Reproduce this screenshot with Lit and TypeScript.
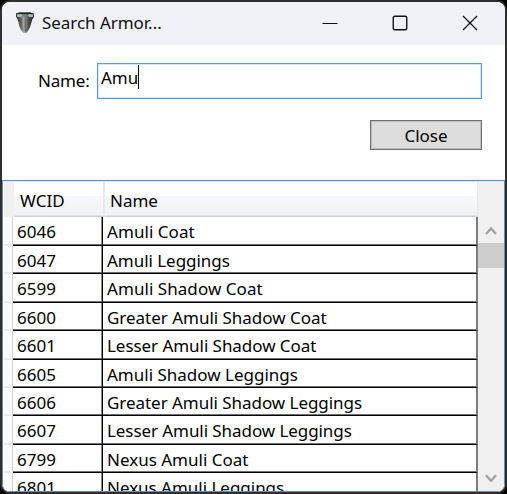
import { LitElement, html, css } from "lit";
import { customElement, property } from "lit/decorators.js";
import { styleMap } from "lit/directives/style-map.js";

interface Armor {
  wcid: string;
  name: string;
  height: number;
  tracking: number;
}

const ARMOR: Armor[] = [
  { wcid: "6046", name: "Amuli Coat", height: 29, tracking: 0.06 },
  { wcid: "6047", name: "Amuli Leggings", height: 28, tracking: -0.04 },
  { wcid: "6599", name: "Amuli Shadow Coat", height: 29, tracking: 0.06 },
  { wcid: "6600", name: "Greater Amuli Shadow Coat", height: 28, tracking: -0.02 },
  { wcid: "6601", name: "Lesser Amuli Shadow Coat", height: 29, tracking: -0.05 },
  { wcid: "6605", name: "Amuli Shadow Leggings", height: 28, tracking: 0 },
  { wcid: "6606", name: "Greater Amuli Shadow Leggings", height: 28, tracking: -0.04 },
  { wcid: "6607", name: "Lesser Amuli Shadow Leggings", height: 29, tracking: -0.07 },
  { wcid: "6799", name: "Nexus Amuli Coat", height: 28, tracking: 0 },
  { wcid: "6801", name: "Nexus Amuli Leggings", height: 29, tracking: -0.02 },
];

@customElement("title-bar")
export class TitleBar extends LitElement {
  @property() label = "";

  static styles = css`
    :host {
      display: flex;
      align-items: center;
      height: 43px;
      flex: none;
      background: #f1f2f8;
      color: #111;
    }
    .shield {
      margin-left: 13px;
      width: 20px;
      height: 22px;
      margin-top: -2px;
    }
    .label {
      margin-left: 7px;
      flex: 1;
      font-size: 17px;
      line-height: 24px;
      letter-spacing: -0.04px;
      margin-top: -2px;
      white-space: nowrap;
    }
    .controls {
      display: flex;
      height: 43px;
    }
    .control {
      width: 70px;
      display: grid;
      place-items: center;
      padding-bottom: 2px;
      height: 41px;
    }
    svg {
      display: block;
    }
  `;

  render() {
    return html`
      <svg class="shield" viewBox="0 0 20 22">
        <defs>
          <linearGradient id="steel" x1="0" x2="1" y1="0" y2="0">
            <stop offset="0.05" stop-color="#2a2c2a" />
            <stop offset="0.28" stop-color="#6a6c6a" />
            <stop offset="0.42" stop-color="#a5a6a4" />
            <stop offset="0.55" stop-color="#7c7e7c" />
            <stop offset="0.75" stop-color="#444644" />
            <stop offset="1" stop-color="#1c1d1c" />
          </linearGradient>
        </defs>
        <path
          d="M1.2 1.2 5 .6h10l3.8.8.3 3-1.8 3.2-2 7-2 4L11.6 20.8H8.4L6 18 4.4 14.2 2.8 7.6 1 4.4z"
          fill="url(#steel)"
        />
        <path d="M1.6 1.1 5 .6h10l3.6.8-3.6.8H5z" fill="#1f211f" />
        <path d="M1.8 2.6 5.5 1.9 7.8 3 5.4 5.3 2.4 5z" fill="#a9bcae" />
        <path d="M18.3 2.6 14.6 1.9 12.4 3l2.4 2.3 3-.4z" fill="#a9bcae" />
        <path d="M7.6 2.6h4.8L11.6 5 10 5.8 8.4 5z" fill="#7b7e7b" />
        <path d="M6.4 6.5 6 12l2 6M13.6 6.5 13.8 12l-1.8 6" fill="none" stroke="#3a3c3a" stroke-opacity=".35" stroke-width=".9" />
        <path d="M10.2 7v12" fill="none" stroke="#4a4c4a" stroke-opacity=".6" stroke-width=".8" />
      </svg>
      <span class="label">${this.label}</span>
      <div class="controls">
        <div class="control">
          <svg width="16" height="16"><path d="M.5 8.5h15" stroke="#111" /></svg>
        </div>
        <div class="control">
          <svg width="16" height="16">
            <rect x="1.25" y="1.25" width="13.5" height="13.5" rx="1.5" fill="none" stroke="#111" stroke-width="1.4" />
          </svg>
        </div>
        <div class="control">
          <svg width="16" height="16"><path d="m1 1 14 14M15 1 1 15" stroke="#111" stroke-width="1.3" /></svg>
        </div>
      </div>
    `;
  }
}

@customElement("armor-grid")
export class ArmorGrid extends LitElement {
  static styles = css`
    :host {
      display: flex;
      flex: 1;
      min-height: 0;
      box-sizing: border-box;
      border: 1px solid #688caf;
      border-top-color: #5f8fc0;
      box-shadow: inset 0 1px #dce8f3;
      padding-top: 1px;
      padding-left: 1px;
      border-radius: 0 0 7px 7px;
      overflow: hidden;
      font-size: 17px;
      color: #000;
    }
    .table {
      width: 474px;
      flex: none;
      display: flex;
      flex-direction: column;
      overflow: hidden;
    }
    .head,
    .row {
      display: grid;
      grid-template-columns: 9px 90px 1fr;
      flex: none;
    }
    .head {
      height: 35px;
      grid-template-columns: 10px 91px 1fr;
    }
    .corner {
      background: #f0f0f0;
    }
    .th {
      box-sizing: border-box;
      height: 35px;
      padding: 3px 0 0 6px;
      line-height: 31px;
      border-bottom: 1px solid #d0d1d3;
      box-shadow: inset 0 -1px #e2e3e5;
      border-right: 2px solid #e8e9ea;
      background: linear-gradient(#fff 0 40%, #f7f8fa 40%, #f0f1f4 100%);
      white-space: nowrap;
    }
    .th.last {
      padding-left: 5px;
      border-right-width: 1px;
    }
    .body {
      flex: 1;
      min-height: 0;
      overflow: hidden;
    }
    .handle,
    .cell {
      box-sizing: border-box;
      white-space: nowrap;
    }
    .handle {
      border-right: 1px solid #d5d5d5;
      border-bottom: 2px solid #e9eaec;
      background: #fbfbfc;
    }
    .cell {
      padding: 2px 0 0 4px;
      line-height: 25px;
      border-bottom: 1px solid #000;
      box-shadow: inset 0 -1px #707070, inset -1px 0 #8b8b8b;
      border-right: 1px solid #000;
    }
    .cell.last {
      box-shadow: inset 0 -1px #707070;
      border-right: 2px solid #7d7d7d;
    }
    .bar {
      flex: 1;
      display: flex;
      flex-direction: column;
      background: #f0f0f0;
    }
    .gap {
      height: 35px;
    }
    .arrow {
      height: 26px;
      display: grid;
      place-items: center;
    }
    .thumb {
      height: 25px;
      background: #cdcdcd;
    }
    .track {
      flex: 1;
    }
  `;

  render() {
    return html`
      <div class="table">
        <div class="head">
          <div class="corner"></div>
          <div class="th">WCID</div>
          <div class="th last">Name</div>
        </div>
        <div class="body">
          ${ARMOR.map(
            (a) => html`
              <div class="row" style=${styleMap({ height: `${a.height}px` })}>
                <div class="handle"></div>
                <div class="cell">${a.wcid}</div>
                <div class="cell last" style=${styleMap({ letterSpacing: `${a.tracking}px` })}>${a.name}</div>
              </div>
            `,
          )}
        </div>
      </div>
      <div class="bar">
        <div class="gap"></div>
        <div class="arrow">
          <svg width="12" height="10"><path d="m1 9 5-5.5L11 9" fill="none" stroke="#a0a0a0" stroke-width="2.2" /></svg>
        </div>
        <div class="thumb"></div>
        <div class="track"></div>
        <div class="arrow">
          <svg width="12" height="10"><path d="m1 2.3 5 5.5 5-5.5" fill="none" stroke="#a0a0a0" stroke-width="2.2" /></svg>
        </div>
      </div>
    `;
  }
}

@customElement("app-root")
export class AppRoot extends LitElement {
  static styles = css`
    :host {
      display: block;
      width: 507px;
      height: 494px;
      background: #000;
      font-family: "Noto Sans", "Open Sans", sans-serif;
    }
    .window {
      box-sizing: border-box;
      width: 507px;
      height: 494px;
      border: 2px solid #2d2e30;
      border-radius: 10px;
      background: #fff;
      display: flex;
      flex-direction: column;
      overflow: hidden;
    }
    .form {
      flex: none;
      height: 135px;
      box-sizing: border-box;
      padding: 18px 23px 0 36px;
      display: flex;
      flex-direction: column;
      align-items: flex-end;
      font-size: 17px;
      color: #000;
    }
    .field {
      display: flex;
      align-self: stretch;
    }
    .name {
      width: 59px;
      line-height: 36px;
      letter-spacing: -0.2px;
      flex: none;
    }
    .input {
      flex: 1;
      height: 36px;
      box-sizing: border-box;
      border: 1px solid #569de5;
      box-shadow: inset 0 0 0 1px #d5e6f8;
      padding: 1px 0 0 3px;
      display: flex;
      line-height: 26px;
    }
    .caret {
      width: 1px;
      height: 24px;
      background: #000;
    }
    .close {
      margin-top: 21px;
      width: 112px;
      height: 30px;
      box-sizing: border-box;
      border: 1px solid #707070;
      box-shadow: inset 0 0 0 1px #bdbdbd;
      background: #ddd;
      text-align: center;
      line-height: 29px;
    }
  `;

  render() {
    return html`
      <div class="window">
        <title-bar label="Search Armor..."></title-bar>
        <div class="form">
          <div class="field">
            <span class="name">Name:</span>
            <div class="input"><span>Amu</span><span class="caret"></span></div>
          </div>
          <div class="close">Close</div>
        </div>
        <armor-grid></armor-grid>
      </div>
    `;
  }
}
